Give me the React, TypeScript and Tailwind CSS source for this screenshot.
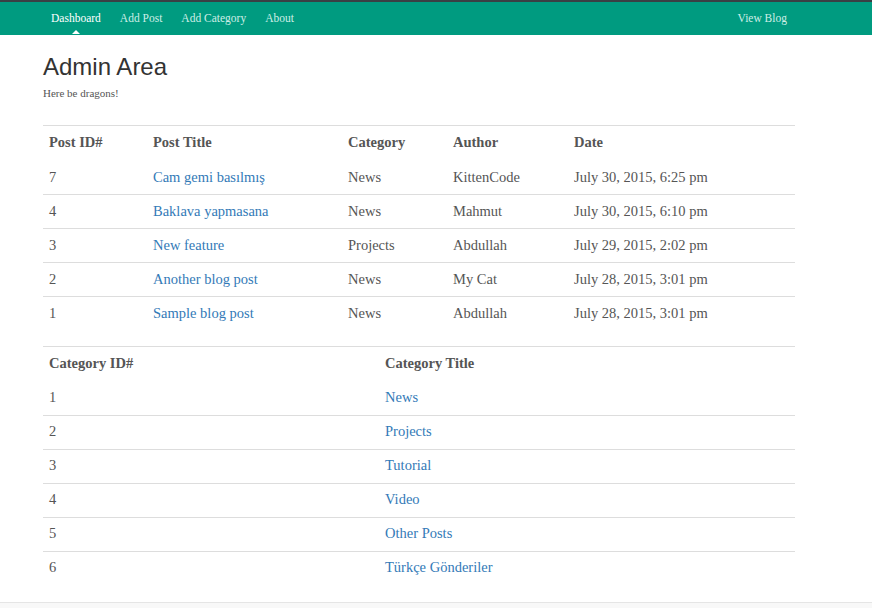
const posts = [
  { id: 7, title: 'Cam gemi basılmış', category: 'News', author: 'KittenCode', date: 'July 30, 2015, 6:25 pm' },
  { id: 4, title: 'Baklava yapmasana', category: 'News', author: 'Mahmut', date: 'July 30, 2015, 6:10 pm' },
  { id: 3, title: 'New feature', category: 'Projects', author: 'Abdullah', date: 'July 29, 2015, 2:02 pm' },
  { id: 2, title: 'Another blog post', category: 'News', author: 'My Cat', date: 'July 28, 2015, 3:01 pm' },
  { id: 1, title: 'Sample blog post', category: 'News', author: 'Abdullah', date: 'July 28, 2015, 3:01 pm' },
];

const categories = [
  { id: 1, title: 'News' },
  { id: 2, title: 'Projects' },
  { id: 3, title: 'Tutorial' },
  { id: 4, title: 'Video' },
  { id: 5, title: 'Other Posts' },
  { id: 6, title: 'Türkçe Gönderiler' },
];

const navItems = ['Dashboard', 'Add Post', 'Add Category', 'About'];

function Navbar() {
  return (
    <div className="border-t-2 border-[#3a3f44] bg-[#009b80]">
      <div className="ml-[43px] w-[752px] h-[33px] flex items-center justify-between text-[11.5px]">
        <ul className="flex gap-[3px]">
          {navItems.map((item, i) => (
            <li key={item} className="relative px-2">
              <a className={i === 0 ? 'text-white' : 'text-[#cdeee6]'} href="#">
                {item}
              </a>
              {i === 0 && (
                // little caret pointing at the active page
                <span className="absolute left-1/2 -translate-x-1/2 top-[20px] w-0 h-0 border-l-[4px] border-r-[4px] border-b-[4px] border-l-transparent border-r-transparent border-b-white" />
              )}
            </li>
          ))}
        </ul>
        <a className="px-2 text-[#cdeee6]" href="#">
          View Blog
        </a>
      </div>
    </div>
  );
}

export default function App() {
  return (
    <div className="min-h-[608px] flex flex-col bg-white text-[#555] font-['Liberation_Serif',serif]">
      <Navbar />

      <div className="ml-[43px] w-[752px] text-[14.5px]">
        <h1 className="mt-[16px] font-['Liberation_Sans',Arial,sans-serif] text-[24px] leading-[32px] text-[#333]">
          Admin Area
        </h1>
        <p className="mt-[2px] text-[11px] leading-[16px]">Here be dragons!</p>

        {/* Posts */}
        <table className="mt-[24px] w-full border-t border-[#ddd] table-fixed border-collapse">
          <thead>
            <tr className="h-[35px] text-left">
              <th className="w-[104px] px-[6px] font-bold">Post ID#</th>
              <th className="w-[195px] px-[6px] font-bold">Post Title</th>
              <th className="w-[105px] px-[6px] font-bold">Category</th>
              <th className="w-[121px] px-[6px] font-bold">Author</th>
              <th className="px-[6px] font-bold">Date</th>
            </tr>
          </thead>
          <tbody>
            {posts.map((p, i) => (
              <tr key={p.id} className={`h-[34px] border-t ${i === 0 ? 'border-transparent' : 'border-[#ddd]'}`}>
                <td className="px-[6px]">{p.id}</td>
                <td className="px-[6px]">
                  <a className="text-[#337ab7]" href="#">{p.title}</a>
                </td>
                <td className="px-[6px]">{p.category}</td>
                <td className="px-[6px]">{p.author}</td>
                <td className="px-[6px]">{p.date}</td>
              </tr>
            ))}
          </tbody>
        </table>

        {/* Categories */}
        <table className="mt-[15px] w-full border-t border-[#ddd] table-fixed border-collapse">
          <thead>
            <tr className="h-[35px] text-left">
              <th className="w-[336px] px-[6px] font-bold">Category ID#</th>
              <th className="px-[6px] font-bold">Category Title</th>
            </tr>
          </thead>
          <tbody>
            {categories.map((c, i) => (
              <tr key={c.id} className={`h-[34px] border-t ${i === 0 ? 'border-transparent' : 'border-[#ddd]'}`}>
                <td className="px-[6px]">{c.id}</td>
                <td className="px-[6px]">
                  <a className="text-[#337ab7]" href="#">{c.title}</a>
                </td>
              </tr>
            ))}
          </tbody>
        </table>
      </div>

      <footer className="mt-[17px] flex-1 border-t border-[#e5e5e5] bg-[#f8f8f8]" />
    </div>
  );
}
